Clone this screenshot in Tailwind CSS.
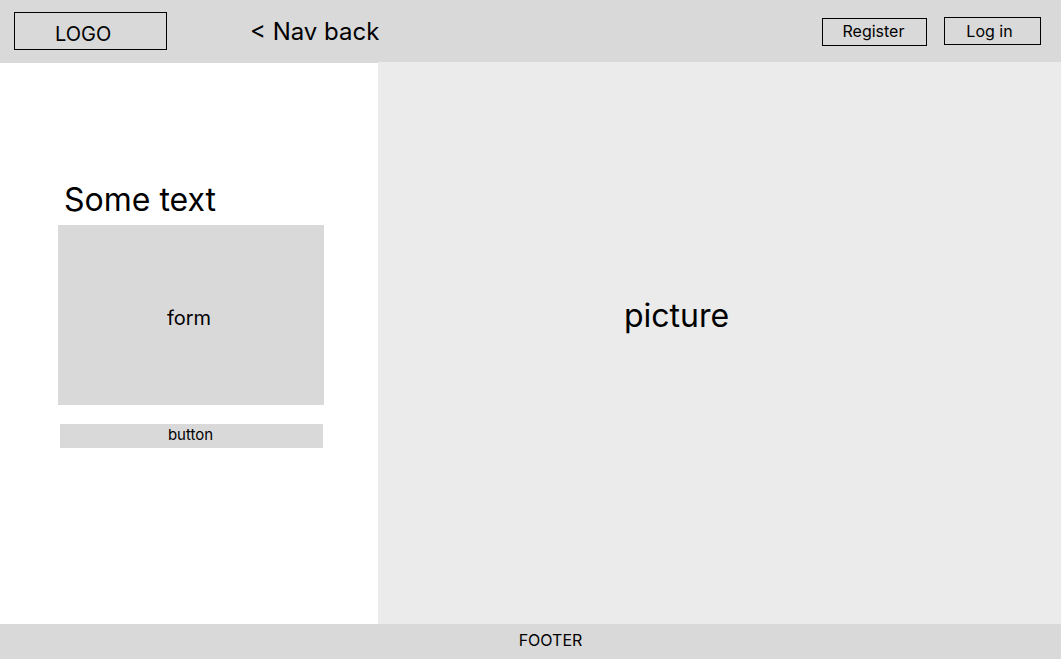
<!DOCTYPE html>
<html lang="en">
<head>
<meta charset="utf-8">
<meta name="viewport" content="width=device-width, initial-scale=1">
<title>Wireframe</title>
<script src="https://cdn.jsdelivr.net/npm/@tailwindcss/browser@4"></script>
</head>
<body class="flex min-h-screen flex-col bg-white font-['Inter',sans-serif] text-black">
  <header class="flex items-start justify-between bg-[#d9d9d9] pr-5 pl-[14px]">
    <div class="flex items-start">
      <a href="#" class="mt-3 mb-3 h-[38px] w-[153px] border border-black pt-[9px] pl-10 text-xl leading-6">LOGO</a>
      <a href="#" class="mt-4 ml-[83px] text-2xl leading-8">&lt; Nav back</a>
    </div>
    <nav class="flex items-start gap-[17px] pt-[17px]">
      <button type="button" class="mt-px h-7 w-[105px] border border-black pr-0.5 pb-0.5 text-base leading-6">Register</button>
      <button type="button" class="h-7 w-[97px] border border-black pr-1.5 text-base leading-6">Log in</button>
    </nav>
  </header>
  <main class="flex grow">
    <section class="w-[378px] shrink-0 border-t border-[#d9d9d9] pt-[117px] pr-[54px] pl-[58px]">
      <h1 class="pl-1.5 text-[32px] leading-10">Some text</h1>
      <form id="details" class="mt-[5px] flex h-[180px] items-center justify-center bg-[#d9d9d9] pt-1.5 pr-1 text-xl leading-6">form</form>
      <button type="submit" form="details" class="mt-[19px] ml-0.5 block h-6 w-[263px] bg-[#d9d9d9] pr-0.5 pb-0.5 text-[15px] leading-5">button</button>
    </section>
    <section class="flex grow items-center justify-center bg-[#ebebeb] pr-[86px] pb-[54px] text-[32px] leading-10">picture</section>
  </main>
  <footer class="bg-[#d9d9d9] pt-1 pb-[7px] pl-10 text-center text-base leading-6">FOOTER</footer>
</body>
</html>
